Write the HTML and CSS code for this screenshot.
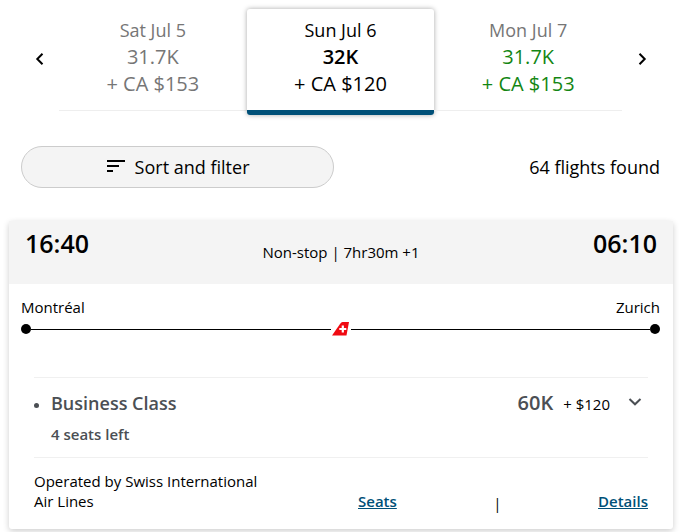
FILE: index.html
```html
<!DOCTYPE html>
<html lang="en">
<head>
    <meta charset="UTF-8">
    <meta name="viewport" content="width=device-width, initial-scale=1.0">
    <title>Flights Montréal - Zurich</title>
    <link rel="stylesheet" href="styles.css">
</head>
<body>
    <nav class="date-strip">
        <button type="button" class="arrow" aria-label="Previous day">
            <svg width="10" height="14" viewBox="0 0 10 14"><path d="M7.5 1.8 L2.3 7 L7.5 12.2"/></svg>
        </button>
        <div class="dates">
            <button type="button" class="date">
                <span class="day">Sat Jul 5</span>
                <span class="points">31.7K</span>
                <span class="cash">+ CA $153</span>
            </button>
            <button type="button" class="date selected">
                <span class="day">Sun Jul 6</span>
                <span class="points">32K</span>
                <span class="cash">+ CA $120</span>
            </button>
            <button type="button" class="date lowest">
                <span class="day">Mon Jul 7</span>
                <span class="points">31.7K</span>
                <span class="cash">+ CA $153</span>
            </button>
        </div>
        <button type="button" class="arrow" aria-label="Next day">
            <svg width="10" height="14" viewBox="0 0 10 14"><path d="M2.5 1.8 L7.7 7 L2.5 12.2"/></svg>
        </button>
    </nav>

    <div class="toolbar">
        <button type="button" class="sort-btn">
            <svg width="20" height="16" viewBox="0 0 20 16"><path d="M1 2 H19 M1 7 H13 M1 12 H7"/></svg>
            Sort and filter
        </button>
        <span class="count">64 flights found</span>
    </div>

    <article class="flight">
        <header class="flight-header">
            <span class="time">16:40</span>
            <span class="duration">Non-stop | 7hr30m +1</span>
            <span class="time">06:10</span>
        </header>

        <div class="route">
            <div class="cities">
                <span>Montréal</span>
                <span>Zurich</span>
            </div>
            <div class="track">
                <span class="dot"></span>
                <span class="line"></span>
                <svg class="airline" width="20" height="14" viewBox="0 0 20 14" role="img" aria-label="Swiss">
                    <path fill="#f00a12" d="M11.5 0 H18 L15.5 13.5 H1 L9 2 Q10.4 0 11.5 0 Z"/>
                    <path fill="#fff" d="M10.7 3.5 H12.9 V5.9 H15.3 V8.1 H12.9 V10.5 H10.7 V8.1 H8.3 V5.9 H10.7 Z"/>
                </svg>
                <span class="line"></span>
                <span class="dot"></span>
            </div>
        </div>

        <div class="details">
            <div class="fare">
                <ul class="cabin">
                    <li>
                        <span class="cabin-name">Business Class</span>
                        <span class="seats-left">4 seats left</span>
                    </li>
                </ul>
                <div class="price">
                    <span class="price-points">60K</span>
                    <span class="price-cash">+ $120</span>
                    <button type="button" class="expand" aria-label="Show fares">
                        <svg width="14" height="10" viewBox="0 0 14 10"><path d="M1.5 2 L7 7.3 L12.5 2"/></svg>
                    </button>
                </div>
            </div>
            <footer class="flight-footer">
                <p class="operator">Operated by Swiss International Air Lines</p>
                <div class="links">
                    <a href="#seats">Seats</a>
                    <span class="divider">|</span>
                    <a href="#details">Details</a>
                </div>
            </footer>
        </div>
    </article>
</body>
</html>
```

FILE: styles.css
```css
* {
    box-sizing: border-box;
}
body {
    margin: 0;
    font-family: "Open Sans", "Noto Sans", sans-serif;
    font-size: 15px;
    line-height: 20px;
    color: #000;
    background: #fff;
}
button {
    font-family: inherit;
    color: inherit;
    background: none;
    border: none;
    padding: 0;
    cursor: pointer;
}
svg {
    display: block;
    fill: none;
    stroke: currentColor;
    stroke-width: 2;
}

/* Date strip */
.date-strip {
    display: flex;
    align-items: flex-start;
    padding-top: 9px;
}
.arrow {
    display: flex;
    align-items: center;
    justify-content: center;
    width: 59px;
    height: 100px;
}
.arrow:first-child {
    padding-left: 20px;
}
.arrow:last-child {
    padding-right: 20px;
}
.dates {
    flex: 1;
    display: grid;
    grid-template-columns: repeat(3, 1fr);
    align-items: start;
}
.date {
    display: flex;
    flex-direction: column;
    align-items: center;
    height: 102px;
    padding-top: 9px;
    border-bottom: 1px solid #eee;
    font-size: 20px;
    line-height: 27px;
    color: #767676;
}
.day {
    font-size: 18px;
    line-height: 25px;
}
.selected {
    height: 106px;
    border-bottom: 5px solid #005078;
    border-radius: 3px;
    box-shadow: 0 0 5px rgba(0, 0, 0, 0.35);
    color: #000;
}
.selected .points {
    font-weight: 600;
}
.lowest .points,
.lowest .cash {
    color: #138613;
}

/* Sort and filter */
.toolbar {
    display: flex;
    align-items: center;
    justify-content: space-between;
    padding: 31px 21px 33px;
    font-size: 18px;
}
.sort-btn {
    display: flex;
    align-items: center;
    justify-content: center;
    gap: 9px;
    width: 49%;
    height: 42px;
    border: 1px solid #ccc;
    border-radius: 21px;
    background: #f4f4f4;
    font-size: 18px;
}

/* Flight card */
.flight {
    margin: 0 8px 3px 9px;
    border-radius: 3px;
    box-shadow: 0 2px 6px rgba(0, 0, 0, 0.2);
}
.flight-header {
    display: flex;
    justify-content: space-between;
    height: 63px;
    padding: 5px 16px 7px;
    background: #f4f4f4;
}
.time {
    font-size: 25px;
    font-weight: 600;
    line-height: 34px;
}
.duration {
    align-self: center;
}
.route {
    padding: 13px 13px 0 12px;
}
.cities {
    display: flex;
    justify-content: space-between;
}
.track {
    display: flex;
    align-items: center;
    margin-top: 5px;
}
.dot {
    width: 10px;
    height: 10px;
    border-radius: 50%;
    background: #000;
}
.line {
    flex: 1;
    height: 1px;
    background: #000;
}
.airline {
    stroke: none;
}
.details {
    padding: 41px 25px 18px;
}
.fare {
    display: flex;
    justify-content: space-between;
    height: 80px;
    padding-top: 12px;
    border-top: 1px solid #f0f0f0;
    color: #4b4f54;
}
.cabin {
    margin: 0;
    padding-left: 17px;
    font-weight: 600;
}
.cabin-name {
    display: block;
    font-size: 18px;
    line-height: 26px;
}
.seats-left {
    display: block;
    margin-top: 8px;
}
.price {
    display: flex;
    align-items: baseline;
    gap: 10px;
    height: 26px;
    line-height: 26px;
}
.price-points {
    font-size: 20px;
    font-weight: 600;
}
.price-cash {
    color: #000;
}
.expand {
    align-self: flex-start;
    padding: 7px 6px 9px 8px;
}
.flight-footer {
    display: grid;
    grid-template-columns: 240px 1fr;
    align-items: end;
    padding-top: 13px;
    border-top: 1px solid #f0f0f0;
}
.operator {
    margin: 0;
}
.links {
    display: flex;
    justify-content: space-between;
    padding-left: 84px;
}
.links a {
    font-weight: 600;
    color: #005078;
}
.divider {
    height: 20px;
    padding-top: 2px;
}
```
